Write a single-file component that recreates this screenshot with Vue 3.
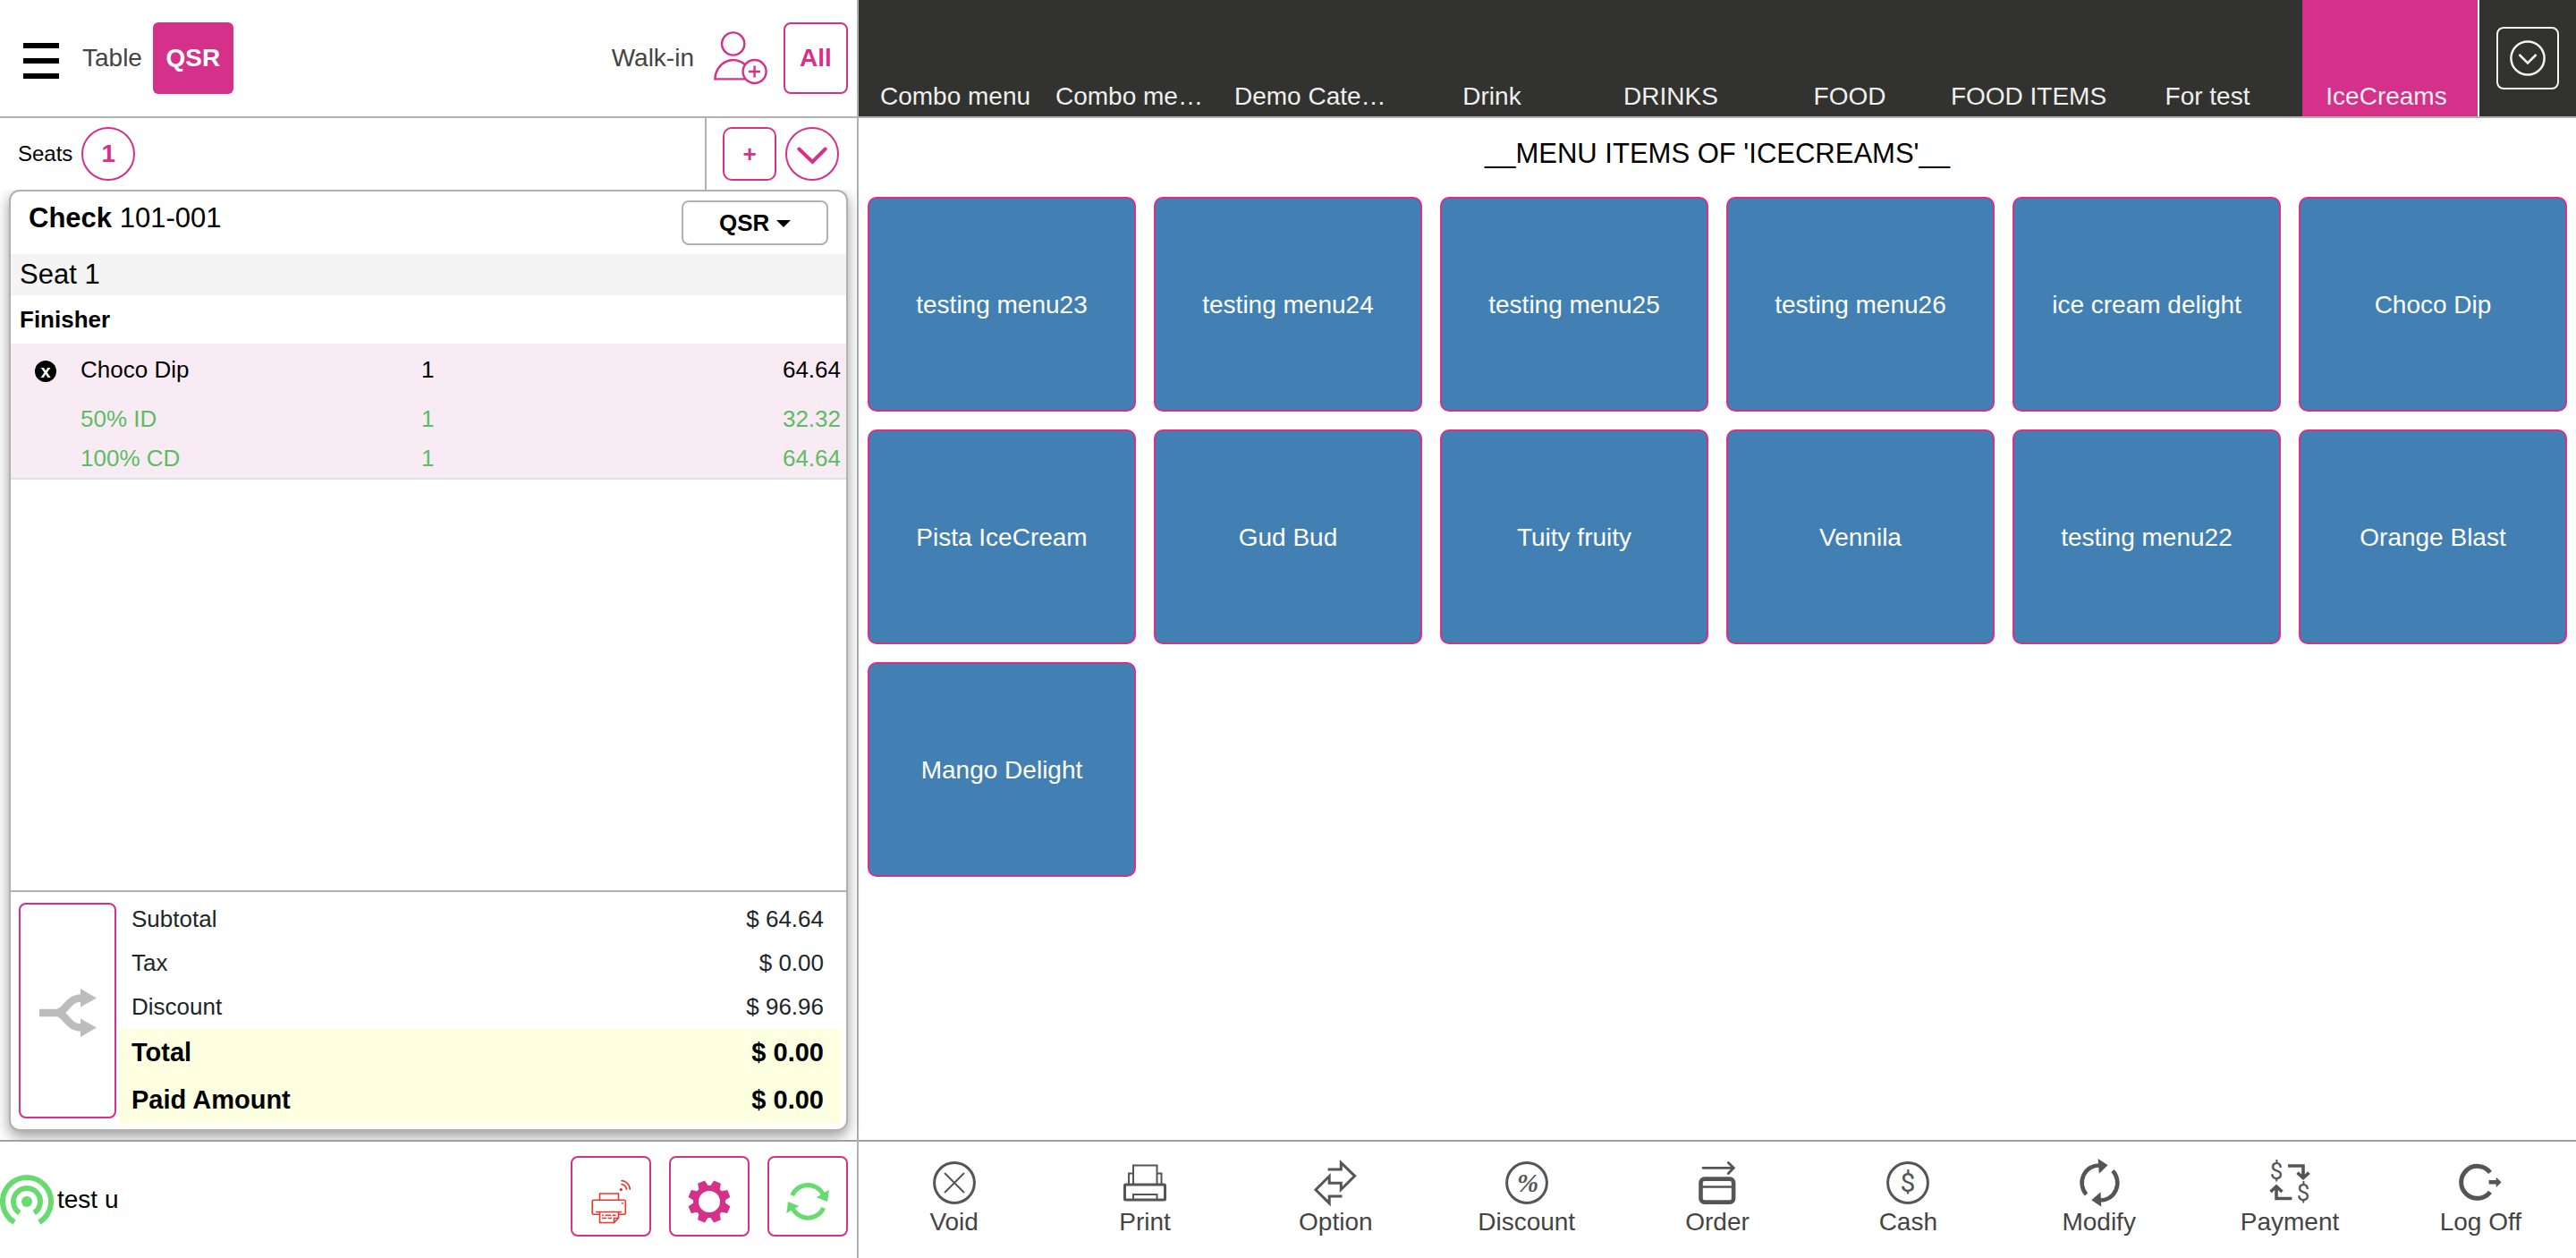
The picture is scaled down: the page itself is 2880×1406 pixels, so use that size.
<script setup>
import { ref } from 'vue'

const categories = [
  'Combo menu', 'Combo me…', 'Demo Cate…', 'Drink', 'DRINKS',
  'FOOD', 'FOOD ITEMS', 'For test', 'IceCreams',
]
const activeCategory = ref('IceCreams')

const menuItems = [
  'testing menu23', 'testing menu24', 'testing menu25', 'testing menu26',
  'ice cream delight', 'Choco Dip', 'Pista IceCream', 'Gud Bud',
  'Tuity fruity', 'Vennila', 'testing menu22', 'Orange Blast', 'Mango Delight',
]

const totals = [
  { label: 'Subtotal', value: '$ 64.64' },
  { label: 'Tax', value: '$ 0.00' },
  { label: 'Discount', value: '$ 96.96' },
  { label: 'Total', value: '$ 0.00', strong: true },
  { label: 'Paid Amount', value: '$ 0.00', strong: true },
]

const discounts = [
  { name: '50% ID', qty: 1, price: '32.32' },
  { name: '100% CD', qty: 1, price: '64.64' },
]

const actions = ['Void', 'Print', 'Option', 'Discount', 'Order', 'Cash', 'Modify', 'Payment', 'Log Off']
const orderType = ref('QSR')

// Eight-tooth gear outline around (cx, cy)
function gearPath(cx, cy) {
  const points = []
  for (let k = 0; k < 8; k++) {
    const mid = 22.5 + 45 * k
    for (const [offset, radius] of [[-18, 18], [-10, 24], [10, 24], [18, 18]]) {
      const a = ((mid + offset) * Math.PI) / 180
      points.push(`${(cx + radius * Math.sin(a)).toFixed(1)} ${(cy - radius * Math.cos(a)).toFixed(1)}`)
    }
  }
  return `M${points.join('L')}Z M${cx - 12} ${cy}a12 12 0 1 0 24 0a12 12 0 1 0 -24 0Z`
}
const gear = gearPath(30, 36)
</script>

<template>
  <div class="pos">
    <section class="check-side">
      <header class="top-bar">
        <button class="plain" aria-label="Menu">
          <svg width="40" height="46" viewBox="0 0 40 46"><path d="M0 9H40M0 26H40M0 43H40" stroke="#000" stroke-width="6" /></svg>
        </button>
        <button class="plain table-mode">Table</button>
        <button class="mode-active">QSR</button>
        <span class="spacer"></span>
        <span class="walk-in">Walk-in</span>
        <button class="plain add-guest" aria-label="Add customer">
          <svg width="60" height="60" viewBox="0 0 60 60" fill="none" stroke="#d5308a" stroke-width="2.4">
            <circle cx="21.7" cy="14" r="12.6" />
            <path d="M35.5 37.5A20.5 21.5 0 0 0 1.4 53.4H35" />
            <circle cx="45.6" cy="45" r="13" />
            <path d="M45.6 38.5V51.5M39 45H52" />
          </svg>
        </button>
        <button class="outline all">All</button>
      </header>

      <div class="seats">
        <span class="seats-label">Seats</span>
        <button class="round">1</button>
        <span class="spacer"></span>
        <div class="seat-tools">
          <button class="outline add-seat">+</button>
          <button class="round" aria-label="Show seats">
            <svg width="60" height="60" viewBox="0 0 60 60"><path d="M15.3 24.5L30.3 39L44.7 24.5" fill="none" stroke="#d5308a" stroke-width="4" stroke-linecap="round" /></svg>
          </button>
        </div>
      </div>

      <div class="card-area">
        <article class="card">
          <div class="card-head">
            <h2><b>Check</b> 101-001</h2>
            <div class="type-box">
              <select v-model="orderType" aria-label="Order type"><option>QSR</option></select>
              <svg class="caret" width="16" height="8" viewBox="0 0 16 8"><path d="M0 0H16L8 8Z" /></svg>
            </div>
          </div>
          <div class="seat-band">Seat 1</div>
          <div class="course">Finisher</div>
          <table class="lines">
            <colgroup><col class="c-remove" /><col class="c-name" /><col class="c-qty" /><col /></colgroup>
            <tbody>
              <tr class="item">
                <td class="remove-cell"><button class="remove" aria-label="Remove Choco Dip">x</button></td>
                <td>Choco Dip</td>
                <td>1</td>
                <td class="price">64.64</td>
              </tr>
              <tr v-for="d in discounts" :key="d.name" class="discount">
                <td></td>
                <td>{{ d.name }}</td>
                <td>{{ d.qty }}</td>
                <td class="price">{{ d.price }}</td>
              </tr>
            </tbody>
          </table>
          <div class="summary">
            <button class="outline split" aria-label="Split check">
              <svg width="64" height="54" viewBox="0 0 64 54">
                <path d="M0 27H19C30 27 31 10.5 47 10.5M19 27C30 27 31 43.5 47 43.5" fill="none" stroke="#bcbcbc" stroke-width="8.6" />
                <path d="M46 0L64 10.5L46 20.5ZM46 33.5L64 43.5L46 54Z" fill="#bcbcbc" />
              </svg>
            </button>
            <table class="totals">
              <tbody>
                <tr v-for="t in totals" :key="t.label" :class="{ strong: t.strong }">
                  <th scope="row">{{ t.label }}</th>
                  <td>{{ t.value }}</td>
                </tr>
              </tbody>
            </table>
          </div>
        </article>
      </div>

      <footer class="user-bar">
        <svg width="60" height="56" viewBox="0 0 60 56" fill="none" stroke="#68db70" stroke-width="6">
          <path d="M16.1 53.1A27 27 0 1 1 43.9 53.1" />
          <path d="M21.9 42.6A15 15 0 1 1 38.1 42.6" />
          <circle cx="30" cy="30" r="6" fill="#68db70" stroke="none" />
        </svg>
        <span class="user">test u</span>
        <span class="spacer"></span>
        <div class="tools">
          <button class="outline tool" aria-label="Printer status">
            <svg width="60" height="60" viewBox="0 0 60 60" fill="none" stroke="#f0352b" stroke-width="1.6">
              <path d="M17.5 34V27H38.5V34" />
              <path d="M17 50.3H10.5Q9.2 50.3 9.2 49V35.6Q9.2 34.3 10.5 34.3H45Q46.3 34.3 46.3 35.6V49Q46.3 50.3 45 50.3H38.5" />
              <path d="M13 47.5H42M17.5 47.5V59.5H33.5L38.5 54.5V47.5M33.5 59V54.5H38" />
              <path d="M20 51.3H22M23.5 51.3H30M31.5 51.3H35.5M20 54.5H25M26.5 54.5H31" />
              <path d="M41.3 16.5A6.2 6.2 0 0 1 47.5 22.7M41.3 12.5A10.2 10.2 0 0 1 51.3 22.7" />
              <circle cx="41.3" cy="22.6" r="1.7" fill="#f0352b" stroke="none" />
              <circle cx="43" cy="37.7" r="1" fill="#f0352b" stroke="none" />
            </svg>
          </button>
          <button class="outline tool" aria-label="Settings">
            <svg width="60" height="60" viewBox="0 0 60 60"><path :d="gear" fill="#d5308a" fill-rule="evenodd" /></svg>
          </button>
          <button class="outline tool" aria-label="Sync">
            <svg width="60" height="60" viewBox="0 0 60 60">
              <path d="M12.7 29A19 19 0 0 1 47.5 28.5M47.7 43A19 19 0 0 1 13 43" fill="none" stroke="#68db70" stroke-width="5" />
              <path d="M54 22.7L39.7 31.3L52 36ZM8 36L20.3 41L6.3 49Z" fill="#68db70" />
            </svg>
          </button>
        </div>
      </footer>
    </section>

    <section class="menu-side">
      <header class="category-bar">
        <nav class="categories">
          <button
            v-for="c in categories" :key="c" class="category"
            :class="{ active: c === activeCategory, clipped: c.endsWith('…') }" @click="activeCategory = c"
          >{{ c }}</button>
        </nav>
        <div class="more">
          <button class="more-button" aria-label="More categories">
            <svg width="40" height="40" viewBox="0 0 40 40" fill="none" stroke="#f4f4f2" stroke-width="2.5">
              <circle cx="20" cy="20" r="18.6" /><path d="M10.5 16L20 25.5L29.5 16" />
            </svg>
          </button>
        </div>
      </header>

      <main class="menu">
        <h1>__MENU ITEMS OF 'ICECREAMS'__</h1>
        <div class="tiles">
          <button v-for="m in menuItems" :key="m" class="tile">{{ m }}</button>
        </div>
      </main>

      <footer class="actions">
        <button v-for="a in actions" :key="a" class="action">
          <svg width="48" height="48" viewBox="0 0 48 48" fill="none" stroke="#555" stroke-width="3">
            <template v-if="a === 'Void'">
              <circle cx="24" cy="24" r="22.4" /><path d="M13 13L35 35M35 13L13 35" stroke-width="2" />
            </template>
            <template v-else-if="a === 'Print'">
              <rect x="1.5" y="26" width="45" height="17" rx="1" />
              <path d="M11 25V4.5H37.5V25M6 25V13.5H10M42.5 25V13.5H38M11 43V37H37.5V43" stroke-width="2" />
            </template>
            <template v-else-if="a === 'Option'">
              <path d="M15.6 9H30.3V1.5L45.6 16.3L30.3 31.5V24.3H17.2V16.5L2 31.7L17.2 46.8V39H31.5" />
            </template>
            <template v-else-if="a === 'Discount'">
              <circle cx="24" cy="24" r="22.4" />
              <text class="glyph percent" x="25" y="34" text-anchor="middle">%</text>
            </template>
            <template v-else-if="a === 'Order'">
              <rect x="5.5" y="19.6" width="36.6" height="26" rx="4" stroke-width="4.6" />
              <path d="M6 28.5H42" stroke-width="2.4" />
              <path d="M8 7.3H42M36.3 1.5L42.3 7.3L36.3 13.5" stroke-width="2.8" stroke-linecap="round" />
            </template>
            <template v-else-if="a === 'Cash'">
              <circle cx="24" cy="24" r="22.4" />
              <text class="glyph cash" x="24" y="34" text-anchor="middle">$</text>
            </template>
            <template v-else-if="a === 'Modify'">
              <path d="M9.5 37A19 19.5 0 0 1 25 4.5M39 10.5A19 19.5 0 0 1 24 43.5" stroke-width="4.6" />
              <path d="M22.6 -3L33.6 4.3L23.8 13.7ZM26.3 50.7L15.3 43.3L25.5 34.3Z" fill="#555" stroke="none" />
            </template>
            <template v-else-if="a === 'Payment'">
              <text class="glyph pay" x="9" y="20" text-anchor="middle">$</text>
              <text class="glyph pay" x="39" y="44" text-anchor="middle">$</text>
              <path d="M22 5H39V18M32.5 12.7L39 18.5L45.5 12.7M26.4 41.5H9V28M2.5 34L9 28L15.5 34" stroke-width="3.6" />
            </template>
            <template v-else>
              <path d="M35 12.5A18 18 0 1 0 35 34.2" stroke-width="5" />
              <path d="M33.6 21H41.7V17.7L47.6 23.3L41.7 29V25.5H33.6Z" fill="#555" stroke="none" />
            </template>
          </svg>
          <span>{{ a }}</span>
        </button>
      </footer>
    </section>
  </div>
</template>

<style>
body { margin: 0; background: #fff; }
</style>

<style scoped>
.pos {
  display: grid;
  grid-template-columns: minmax(0, 1fr) minmax(0, 2fr);
  min-height: 100vh;
  font-family: "Liberation Sans", Arial, sans-serif;
  font-size: 28px;
  color: #000;
}
.pos *, .pos { box-sizing: border-box; }
button {
  display: flex;
  align-items: center;
  justify-content: center;
  padding: 0;
  border: 0;
  background: none;
  font: inherit;
  color: inherit;
}
svg { display: block; flex: none; overflow: visible; }
.spacer { flex: 1; }

.check-side, .menu-side { display: flex; flex-direction: column; }
.check-side { border-right: 2px solid #b1b1b1; }

.top-bar {
  display: flex;
  align-items: center;
  height: 132px;
  padding: 0 10px 0 26px;
  border-bottom: 2px solid #b1b1b1;
  color: #444;
}
.table-mode { margin: 0 12px 0 26px; }
.mode-active {
  width: 90px;
  height: 80px;
  border-radius: 6px;
  background: #d5308a;
  color: #fff;
  font-weight: bold;
}
.add-guest { margin: 0 18px 0 22px; }
.outline {
  border: 2px solid #d5308a;
  border-radius: 8px;
  background: #fff;
  color: #d5308a;
  font-weight: bold;
}
.all { width: 72px; height: 80px; }

.seats {
  position: relative;
  z-index: 1;
  display: flex;
  align-items: center;
  height: 80px;
  padding-left: 20px;
  background: #fff;
}
.seats-label { margin-right: 10px; font-size: 24px; }
.round {
  width: 60px;
  height: 60px;
  border: 2px solid #d5308a;
  border-radius: 50%;
  color: #d5308a;
  font-weight: bold;
}
.seat-tools {
  display: flex;
  align-items: center;
  gap: 10px;
  height: 100%;
  padding: 0 20px 0 18px;
  border-left: 2px solid #b1b1b1;
}
.add-seat { width: 60px; height: 60px; border-radius: 10px; font-size: 26px; }

.card-area {
  display: flex;
  flex: 1;
  padding: 0 10px 10px;
}
.card {
  display: flex;
  flex: 1;
  flex-direction: column;
  border: 2px solid #b1b1b1;
  border-radius: 12px;
  background: #fff;
  box-shadow: 0 6px 16px rgba(0, 0, 0, 0.4);
}
.card-head {
  display: flex;
  justify-content: space-between;
  align-items: flex-start;
  height: 70px;
  padding: 10px 20px;
}
.card-head h2 { margin: 0; font-size: 31px; font-weight: normal; line-height: 40px; }
.type-box {
  position: relative;
  width: 164px;
  height: 50px;
  border: 2px solid #b1b1b1;
  border-radius: 8px;
}
.type-box select {
  width: 100%;
  height: 100%;
  padding: 0 0 0 40px;
  border: 0;
  background: none;
  appearance: none;
  font: bold 26px "Liberation Sans", Arial, sans-serif;
  color: #000;
}
.caret { position: absolute; top: 20px; right: 40px; pointer-events: none; }
.seat-band {
  padding-left: 10px;
  background: #f4f4f4;
  font-size: 31px;
  line-height: 46px;
}
.course { padding-left: 10px; font-size: 26px; font-weight: bold; line-height: 54px; }

.lines {
  width: 100%;
  table-layout: fixed;
  border-collapse: collapse;
  border-bottom: 2px solid #dee2e6;
  background: #f9ebf4;
  font-size: 26px;
  line-height: 30px;
}
.lines td { padding: 7px 0; vertical-align: top; }
.lines .item td { padding: 14px 0 18px; }
.lines .item .remove-cell { padding: 19px 0 0 27px; }
.c-remove { width: 76px; }
.c-name { width: 41%; }
.c-qty { width: 20%; }
.lines td:nth-child(2) { padding-left: 2px; }
.lines td.price { padding-right: 6px; text-align: right; }
.discount { color: #5bbd65; }
.remove {
  width: 24px;
  height: 24px;
  border-radius: 50%;
  background: #000;
  color: #fff;
  font-size: 20px;
  font-weight: bold;
  line-height: 20px;
}

.summary {
  display: flex;
  gap: 3px;
  margin-top: auto;
  padding: 6px 6px 6px 9px;
  border-top: 2px solid #b1b1b1;
}
.split { width: 109px; margin: 6px 0; padding-top: 4px; }
.totals { flex: 1; border-collapse: collapse; font-size: 26px; color: #212529; }
.totals tr { height: 49px; }
.totals th { padding: 0 0 0 14px; font-weight: normal; text-align: left; }
.totals td { padding: 0 19px 0 0; text-align: right; }
.totals .strong { height: 53px; background: #fcffe0; font-size: 29px; color: #000; }
.totals .strong th, .totals .strong td { font-weight: bold; }

.user-bar {
  position: relative;
  z-index: 1;
  display: flex;
  align-items: center;
  height: 132px;
  padding-right: 10px;
  border-top: 2px solid #a0a0a0;
  background: #fff;
}
.user { margin-left: 4px; }
.tools { display: flex; gap: 20px; padding-bottom: 8px; }
.tool { width: 90px; height: 90px; }

.category-bar {
  display: flex;
  height: 132px;
  border-bottom: 2px solid #b1b1b1;
  background: #323230;
}
.categories {
  display: grid;
  flex: 1;
  grid-template-columns: repeat(9, minmax(0, 1fr));
  gap: 4px;
  padding-left: 14px;
  border-right: 2px solid #fff;
}
.category {
  align-items: flex-end;
  padding: 0 14px 6px 6px;
  color: #efefed;
  line-height: 32px;
  white-space: nowrap;
}
.category.clipped { justify-content: flex-start; }
.category.active { background: #d5308a; }
.more { display: flex; align-items: center; justify-content: center; width: 108px; }
.more-button { width: 70px; height: 70px; border: 2px solid #f4f4f2; border-radius: 8px; }

.menu { flex: 1; padding: 0 10px; }
.menu h1 {
  margin: 0;
  padding: 20px 0 28px;
  font-size: 31px;
  font-weight: normal;
  line-height: 40px;
  text-align: center;
}
.tiles { display: grid; grid-template-columns: repeat(6, minmax(0, 1fr)); gap: 20px; }
.tile {
  height: 240px;
  padding-top: 2px;
  border: 2px solid #d5308a;
  border-radius: 10px;
  background: #427fb3;
  color: #fff;
}

.actions {
  display: grid;
  grid-template-columns: repeat(9, minmax(0, 1fr));
  height: 132px;
  border-top: 2px solid #a0a0a0;
}
.action { flex-direction: column; gap: 2px; color: #444; line-height: 36px; }
.glyph { fill: #555; stroke: none; font-family: Roboto, "Liberation Sans", sans-serif; }
.percent { font: italic bold 29px "Liberation Serif", serif; }
.cash { font-size: 30px; }
.pay { font-size: 26px; }
</style>
